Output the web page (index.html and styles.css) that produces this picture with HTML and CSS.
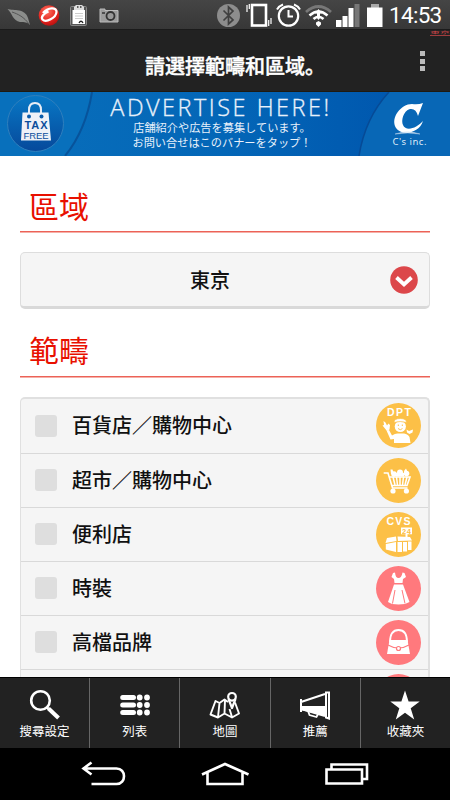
FILE: index.html
```html
<!DOCTYPE html>
<html lang="zh-Hant">
<head>
  <meta charset="UTF-8" />
  <meta name="viewport" content="width=device-width, initial-scale=1.0"/>
  <title>請選擇範疇和區域。</title>
  <link rel="stylesheet" href="styles.css">
</head>
<body>

  <!-- Status bar -->
  <div class="status-bar">
    <svg class="notices" width="130" height="30" viewBox="0 0 130 30">
      <defs>
        <radialGradient id="ball" cx=".4" cy=".3" r=".8">
          <stop offset="0" stop-color="#ff7563"/>
          <stop offset=".6" stop-color="#e3211c"/>
          <stop offset="1" stop-color="#a80d0d"/>
        </radialGradient>
      </defs>
      <path d="M7.500 9C14 11 25 8 28 18L30 25C27 22 25 22 20 22C13 21 12 13 7.500 9Z" fill="#8b8d8b"/>
      <path d="M12 12C18 14 24 17 29 24" fill="none" stroke="#555" stroke-width="1"/>
      <circle cx="49" cy="15.500" r="10.300" fill="url(#ball)"/>
      <path d="M43 13C48 7 57 7 56.500 12C56 18 46 23 42.500 19.500C40.500 17 44 13.500 48.500 11.500" fill="none" stroke="#fff" stroke-width="2.300"/>
      <rect x="70.500" y="6.500" width="16" height="19" rx="1" fill="#555" stroke="#888"/>
      <path d="M72.500 10H85V24H72.500Z" fill="#fff"/>
      <path d="M74 7L76 5H82L84 7V10H74Z" fill="#ddd"/>
      <path d="M77 7H78.500M80 7H81.500" stroke="#333" stroke-width="1.500"/>
      <path d="M75 13.500H83M75 16H83M75 18.500H83" stroke="#ccc"/>
      <path d="M79 23Q81 19.500 83 23" fill="none" stroke="#222" stroke-width="1.300"/>
      <path d="M100 9H105V10.500H118V22H100Z" fill="#9b9b9b" stroke="#bbb"/>
      <circle cx="110.500" cy="16" r="4" fill="#999" stroke="#333" stroke-width="1.800"/>
      <path d="M102 13H105" stroke="#333" stroke-width="1.500"/>
    </svg>
    <svg width="172" height="30" viewBox="215 0 172 30">
      <circle cx="228.500" cy="15.500" r="11.500" fill="#8d8d8d"/>
      <path d="M223.500 10.500L233 20L228.500 24V7L233 11L223.500 20.500" fill="none" stroke="#404040" stroke-width="1.700"/>
      <g fill="none" stroke="#fff">
        <rect x="252" y="5" width="14" height="20.500" stroke-width="2.600"/>
        <path d="M247 5V12M249.300 4V9M268.700 20V26M271 18V24" stroke-width="1.200"/>
        <circle cx="288.500" cy="16" r="9.700" stroke-width="2.200"/>
        <path d="M288.500 10V16.500H293" stroke-width="2"/>
        <path d="M277 9.500Q279 6 283 4.500M294 4.500Q298 6 300 9.500" stroke-width="2"/>
        <path d="M306 12Q318.500 1 331 12" stroke="#777" stroke-width="2.800"/>
        <path d="M309.500 15.500Q318.500 7.500 327.500 15.500M313.500 19Q318.500 14.500 323.500 19" stroke-width="2.600"/>
      </g>
      <path d="M318.500 9L322 13.500H320V18L318.500 20L317 18V13.500H315ZM316 22.500L318.500 21L321 22.500V24.500L318.500 27L316 24.500Z" fill="#fff"/>
      <path d="M336 20H341.500V27H336ZM342.500 16H347.500V27H342.500ZM348.500 8H353.500V27H348.500Z" fill="#fff"/>
      <path d="M354.500 4H359.500V27H354.500Z" fill="#777"/>
      <path d="M367 7.500H371V4H379V7.500H382.500V27H367Z" fill="#fff"/>
      <path d="M371 4H379V7.500H371Z" fill="#aaa"/>
    </svg>
    <span class="clock">14:53</span>
  </div>

  <header class="header">
    <h1 lang="ja">請選擇範疇和區域。</h1>
    <span class="sliver">東京</span>
    <div class="menu-dots"><i></i><i></i><i></i></div>
  </header>

  <!-- Ad banner -->
  <div class="banner" lang="ja">
    <svg class="banner-bg" width="450" height="64" viewBox="0 0 450 64">
      <defs>
        <linearGradient id="blue" x2="1" y2="0">
          <stop offset="0" stop-color="#096fbb"/>
          <stop offset=".5" stop-color="#0366b7"/>
          <stop offset=".88" stop-color="#0057ae"/>
          <stop offset="1" stop-color="#0868b8"/>
        </linearGradient>
        <linearGradient id="disc" x2="0" y2="1">
          <stop offset="0" stop-color="#0878c5"/>
          <stop offset="1" stop-color="#06499b"/>
        </linearGradient>
      </defs>
      <rect width="450" height="64" fill="url(#blue)"/>
      <path d="M0 0H92Q86 38 65 64H0Z" fill="#0870bc"/>
      <path d="M92 0Q86 38 65 64" fill="none" stroke="#07539b" stroke-width="2"/>
      <path d="M450 0H389Q365 26 359 64H450Z" fill="#0867b6"/>
      <path d="M389 0Q365 26 359 64" fill="none" stroke="#064a96" stroke-width="1.500"/>
      <circle cx="35.500" cy="31.500" r="28" fill="url(#disc)" stroke="#2f7fbd"/>
      <path d="M29 25V18Q29 11 35 11Q41 11 41 18V25" fill="none" stroke="#e8edf5" stroke-width="2"/>
      <path d="M22.500 20.500H48.500L51 48.500H21Z" fill="#eef1f7"/>
      <circle cx="29" cy="24.500" r="2" fill="#0a5baa"/>
      <circle cx="41.500" cy="24.500" r="2" fill="#0a5baa"/>
      <text x="24.500" y="36.500" class="tax" textLength="23">TAX</text>
      <text x="23.500" y="46.500" class="free" textLength="25">FREE</text>
      <path d="M423 11L418 24Q416 16 410 17C403 19 401 29 403 33C406 40 417 36 423 29C419 42 401 44 396 36C390 26 401 12 412 12Q418 13 423 11Z" fill="#fff"/>
      <path d="M395 42Q408 38 420 42Q408 40 395 42Z" fill="#fff" stroke="#b5d0ea" stroke-width=".5"/>
      <text x="392.500" y="53" class="inc" textLength="34">C's inc.</text>
    </svg>
    <div class="banner-text">
      <strong>ADVERTISE HERE!</strong>
      <span>店舗紹介や広告を募集しています。</span>
      <span>お問い合せはこのバナーをタップ！</span>
    </div>
  </div>

  <main class="content">
    <h2>區域</h2>
    <div class="select">
      <span>東京</span>
      <svg width="28" height="28" viewBox="0 0 28 28">
        <circle cx="14" cy="14" r="13.800" fill="#dc474a"/>
        <path d="M6.500 11.500L14 18.500L21.500 11.500" fill="none" stroke="#fff" stroke-width="3.800"/>
      </svg>
    </div>

    <h2 class="second">範疇</h2>
    <ul class="list">
      <li>
        <span class="check"></span><span class="name">百貨店／購物中心</span>
        <svg class="badge" viewBox="0 0 45 45">
          <circle cx="22.500" cy="22.500" r="22.500" fill="#fcc047"/>
          <text x="11" y="13" class="badge-text" textLength="24">DPT</text>
          <g fill="#fff">
            <circle cx="24.300" cy="23.500" r="5.600"/>
            <path d="M18 19.500Q18 15.500 24.300 15.500Q30.500 15.500 30.500 19.500Q24 17.500 18 19.500Z" stroke="#fcc047" stroke-width=".7"/>
            <path d="M13 27L16 32.500Q19 30.500 21.500 30.500H28Q32 31 33.500 34L34.500 40H18V36L14.500 36.500L10.500 27.500Z"/>
            <path d="M11 28L6.500 22.500L8 22L7.500 18L9.500 19.500L11 22.500L12.500 20.500L14 22L13.500 26.500Z"/>
            <path d="M30.500 26.500L33 28L37 26.500L36.500 29.500L33.500 31L31 29.500Z"/>
          </g>
          <path d="M22.300 21.500V23M26.300 21.500V23" stroke="#fcc047"/>
          <path d="M22 25.500Q24.300 28 26.500 25.500" fill="none" stroke="#fcc047" stroke-width=".9"/>
        </svg>
      </li>
      <li>
        <span class="check"></span><span class="name">超市／購物中心</span>
        <svg class="badge" viewBox="0 0 45 45">
          <circle cx="22.500" cy="22.500" r="22.500" fill="#fcc047"/>
          <path d="M7.700 15H12L16.500 30H31.500M13 19H34L31 27.500H16" fill="none" stroke="#fff" stroke-width="1.600"/>
          <path d="M17 19L19 27M20.500 19L21.500 27M24 19V27M27.500 19L26.500 27M31 19L29 27" stroke="#fff" stroke-width="1.500"/>
          <g fill="#fff">
            <circle cx="17" cy="33" r="2.600"/><circle cx="30.400" cy="33" r="2.600"/>
            <circle cx="18" cy="16" r="2.800"/><circle cx="24" cy="14.500" r="3"/><circle cx="30.500" cy="15.500" r="2.800"/>
            <path d="M20 15H28V18.500H20ZM28 13L30 10.500L33 17H29ZM14.500 11.500H16.500L18 16H15Z"/>
          </g>
        </svg>
      </li>
      <li>
        <span class="check"></span><span class="name">便利店</span>
        <svg class="badge" viewBox="0 0 45 45">
          <circle cx="22.500" cy="22.500" r="22.500" fill="#fcc047"/>
          <text x="10.500" y="13" class="badge-text" textLength="24">CVS</text>
          <path d="M25 15.500H36V22.200H31.500V25H29.500V22.200H25Z" fill="#fff"/>
          <text x="26" y="21.600" class="sign" textLength="9">24</text>
          <path d="M11 26L20 24.500L20.500 29L9.500 31ZM21.500 24.500L34 25L36 28.500L22 29ZM9.800 32L20 30V40L9.800 37.500ZM21.500 30H26V40H21.500ZM27 30H31V39.500H27ZM32 29.500H35.500V38H32Z" fill="#fff"/>
        </svg>
      </li>
      <li>
        <span class="check"></span><span class="name">時裝</span>
        <svg class="badge" viewBox="0 0 45 45">
          <circle cx="22.500" cy="22.500" r="22.500" fill="#ff797d"/>
          <path d="M17 7L19 6.500Q19.500 12 22.500 12Q25.500 12 26.500 6.500L28.500 7L30 11L27 13L26.500 17H18.500L18 13L15.500 11ZM18 18.500H27L33.500 36L29 38L22.500 38.500L16 38L12 36Z" fill="#fff"/>
          <path d="M19 24L16.500 37.500M26 24L29 37.500" stroke="#ff797d"/>
        </svg>
      </li>
      <li>
        <span class="check"></span><span class="name">高檔品牌</span>
        <svg class="badge" viewBox="0 0 45 45">
          <circle cx="22.500" cy="22.500" r="22.500" fill="#ff797d"/>
          <path d="M14 22Q14 10 22.500 10Q31 10 31 22" fill="none" stroke="#fff" stroke-width="1.800"/>
          <path d="M13.500 20H31.500L34 34H11Z" fill="#fff"/>
          <path d="M12 25Q17 28 22.500 28Q28 28 33 25" fill="none" stroke="#ff797d" stroke-width="1.100"/>
          <circle cx="22.500" cy="28.500" r="2" fill="#fff" stroke="#ff797d" stroke-width="1.200"/>
        </svg>
      </li>
      <li>
        <span class="check"></span><span class="name"></span>
        <svg class="badge" viewBox="0 0 45 45"><circle cx="22.500" cy="22.500" r="22.500" fill="#ff797d"/></svg>
      </li>
    </ul>
  </main>

  <!-- App tabs -->
  <nav class="tabs">
    <a>
      <svg width="34" height="32" viewBox="0 0 34 32" fill="none" stroke="#fff">
        <circle cx="12.500" cy="11.500" r="9.300" stroke-width="2.600"/>
        <path d="M18.500 18L20.500 20" stroke-width="2.500"/><path d="M20.500 19.500L30.500 29" stroke-width="4"/>
      </svg>
      搜尋設定
    </a>
    <a>
      <svg width="34" height="32" viewBox="0 0 34 32" fill="none" stroke="#fff" stroke-linecap="round" stroke-width="5.800">
        <path d="M4.700 8.500H15.500M4.700 16H15.500M4.700 23.500H15.500" stroke-width="5"/>
        <path d="M21.700 8.500H21.710M21.700 16H21.710M21.700 23.500H21.710M29 8.500H29.010M29 16H29.010M29 23.500H29.010"/>
      </svg>
      列表
    </a>
    <a>
      <svg width="34" height="32" viewBox="0 0 34 32" fill="none" stroke="#fff" stroke-width="1.900" stroke-linejoin="round">
        <path d="M20 13L16.500 10.500L11.500 14L7.500 12L2.500 25.500L10 28.500L16.500 24.500L24 28.500L31 24.500L27 13.500M11.500 14L10 28M17 11L16.500 24.500M21.500 20L24 28"/>
        <circle cx="24" cy="7.800" r="3.800" stroke-width="2.200"/>
        <path d="M20.500 10L24 19L27.500 10" stroke-width="2.200"/>
      </svg>
      地圖
    </a>
    <a>
      <svg width="34" height="32" viewBox="0 0 34 32" fill="none" stroke="#fff" stroke-width="2">
        <path d="M3 10V23M3 13L27 5M3 20L27 27"/>
        <path d="M3 17H27V27L3 21Z" fill="#fff" stroke="none"/>
        <path d="M28 3.500H31V29.500L28 28.500Z"/>
        <path d="M10 22L11.500 26L18.500 28L20 25" stroke-width="1.800"/>
      </svg>
      推薦
    </a>
    <a>
      <svg width="34" height="32" viewBox="0 0 34 32">
        <path d="M17 1.500L20.600 12.500H31.700L22.700 19.200L26.200 30.500L17 23.700L7.800 30.500L11.300 19.200L2.300 12.500H13.400Z" fill="#fff"/>
      </svg>
      收藏夾
    </a>
  </nav>

  <!-- System keys -->
  <div class="keys">
    <svg width="450" height="52" viewBox="0 0 450 52" fill="none" stroke="#fff" stroke-width="2.600">
      <path d="M91.500 14.500L83.500 20.500L91.500 26.500M84 20.500H116.500C126.500 20.500 126.500 36 116.500 36H91.500"/>
      <path d="M202 26.500L225 16L248.500 26.500M207.500 25V36H242.500V25"/>
      <path d="M326.500 21.500H362V35.500H326.500ZM331.500 21V16.500H367V31H362"/>
    </svg>
  </div>

</body>
</html>
```

FILE: styles.css
```css
* {
  margin: 0;
  padding: 0;
  box-sizing: border-box;
}

body {
  display: flex;
  flex-direction: column;
  width: 450px;
  height: 800px;
  overflow: hidden;
  background: #fff;
  font-family: "Noto Sans CJK TC", sans-serif;
}

svg {
  display: block;
  flex-shrink: 0;
}

.status-bar {
  display: flex;
  height: 30px;
  flex-shrink: 0;
  background: linear-gradient(#454545, #373737);
  border-bottom: 1px solid #1b1b1b;
}

.notices {
  margin-right: 85px;
}

.clock {
  width: 60px;
  margin-left: 2px;
  font: 22.5px/31px Roboto, sans-serif;
  letter-spacing: -0.7px;
  color: #fff;
}

.header {
  position: relative;
  display: flex;
  align-items: center;
  justify-content: center;
  height: 62px;
  flex-shrink: 0;
  background: #222;
  border-bottom: 1px solid #1e1a12;
}

.header h1 {
  padding: 10px 0 0 20px;
  font-family: "Noto Sans CJK JP", sans-serif;
  font-size: 20px;
  font-weight: 500;
  line-height: 30px;
  color: #fff;
  -webkit-text-stroke: 0.4px #fff;
}

/* squashed region label at the top edge */
.sliver {
  position: absolute;
  top: -10px;
  right: 0;
  border-bottom: 2px solid #d5484b;
  font-size: 10px;
  line-height: 14px;
  color: #d5484b;
  transform: scaleY(0.35);
  transform-origin: bottom;
}

.menu-dots {
  position: absolute;
  top: 21px;
  right: 25px;
  display: grid;
  gap: 2.5px;
}

.menu-dots i {
  width: 5px;
  height: 5px;
  background: #bbb;
}

.banner {
  position: relative;
  height: 64px;
  flex-shrink: 0;
}

.banner-bg {
  position: absolute;
  inset: 0;
}

.banner-text {
  position: relative;
  display: flex;
  flex-direction: column;
  align-items: center;
  width: 224px;
  margin-left: 110px;
  color: #e8f1fb;
  font-family: "Noto Sans CJK JP", sans-serif;
  font-size: 11.2px;
  line-height: 15px;
  white-space: nowrap;
}

.banner-text strong {
  height: 28px;
  margin-left: -2px;
  font: 300 23.5px/31px "Open Sans", sans-serif;
  letter-spacing: 2.5px;
  -webkit-text-stroke: 0.3px #e8f1fb;
}

.tax {
  font: bold 11px "Liberation Sans", sans-serif;
  fill: #0b4d9c;
}

.free {
  font: 9.5px "Liberation Sans", sans-serif;
  fill: #0b4d9c;
}

.inc {
  font: 9.5px "Noto Sans", sans-serif;
  fill: #dfebf8;
}

.content {
  flex: 1;
  min-height: 0;
  padding: 20px 20px 0;
  overflow: hidden;
}

.content h2 {
  height: 56px;
  padding-left: 9px;
  border-bottom: 1px solid #ec6257;
  box-shadow: 0 1px #f5b0a9;
  font-size: 30px;
  font-weight: 400;
  line-height: 58px;
  color: #e81000;
}

.content .second {
  height: 57px;
  margin-top: 11px;
}

.select {
  display: flex;
  align-items: center;
  height: 57px;
  margin-top: 20px;
  padding-right: 11px;
  border: 1px solid #ddd;
  border-bottom: 3px solid #d9d9d9;
  border-radius: 5px;
  background: #f5f5f5;
  font-size: 20px;
  font-weight: 500;
  color: #111;
}

.select span {
  flex: 1;
  padding-left: 9px;
  text-align: center;
}

.list {
  margin-top: 20px;
  border: 2px solid #e0e0e0;
  border-width: 2px 2px 0 1px;
  border-radius: 5px 5px 0 0;
  background: #f5f5f5;
  list-style: none;
}

.list li {
  display: flex;
  align-items: center;
  height: 54px;
  padding: 0 7px 1px 14px;
  border-bottom: 1px solid #d9d9d9;
}

.check {
  width: 22px;
  height: 22px;
  border-radius: 3px;
  background: #dedede;
}

.name {
  flex: 1;
  padding: 0 0 1px 15px;
  font-size: 20px;
  font-weight: 500;
  line-height: 30px;
  color: #111;
}

.badge {
  width: 45px;
  height: 45px;
}

.list li:first-child {
  height: 55px;
}

.badge-text {
  font: bold 10.5px "Liberation Sans", sans-serif;
  fill: #fff;
}

.sign {
  font: bold 7.5px "Liberation Sans", sans-serif;
  fill: #fcc047;
}

.tabs {
  display: flex;
  height: 71px;
  flex-shrink: 0;
  border-top: 1px solid #000;
  background: #222;
}

.tabs a {
  display: flex;
  flex: 1;
  flex-direction: column;
  align-items: center;
  padding-top: 11px;
  border-right: 1px solid #666;
  font-size: 12.5px;
  line-height: 20px;
  color: #fff;
}

.tabs a:last-child {
  border-right: none;
}

.keys {
  height: 52px;
  flex-shrink: 0;
  background: #000;
}
```
